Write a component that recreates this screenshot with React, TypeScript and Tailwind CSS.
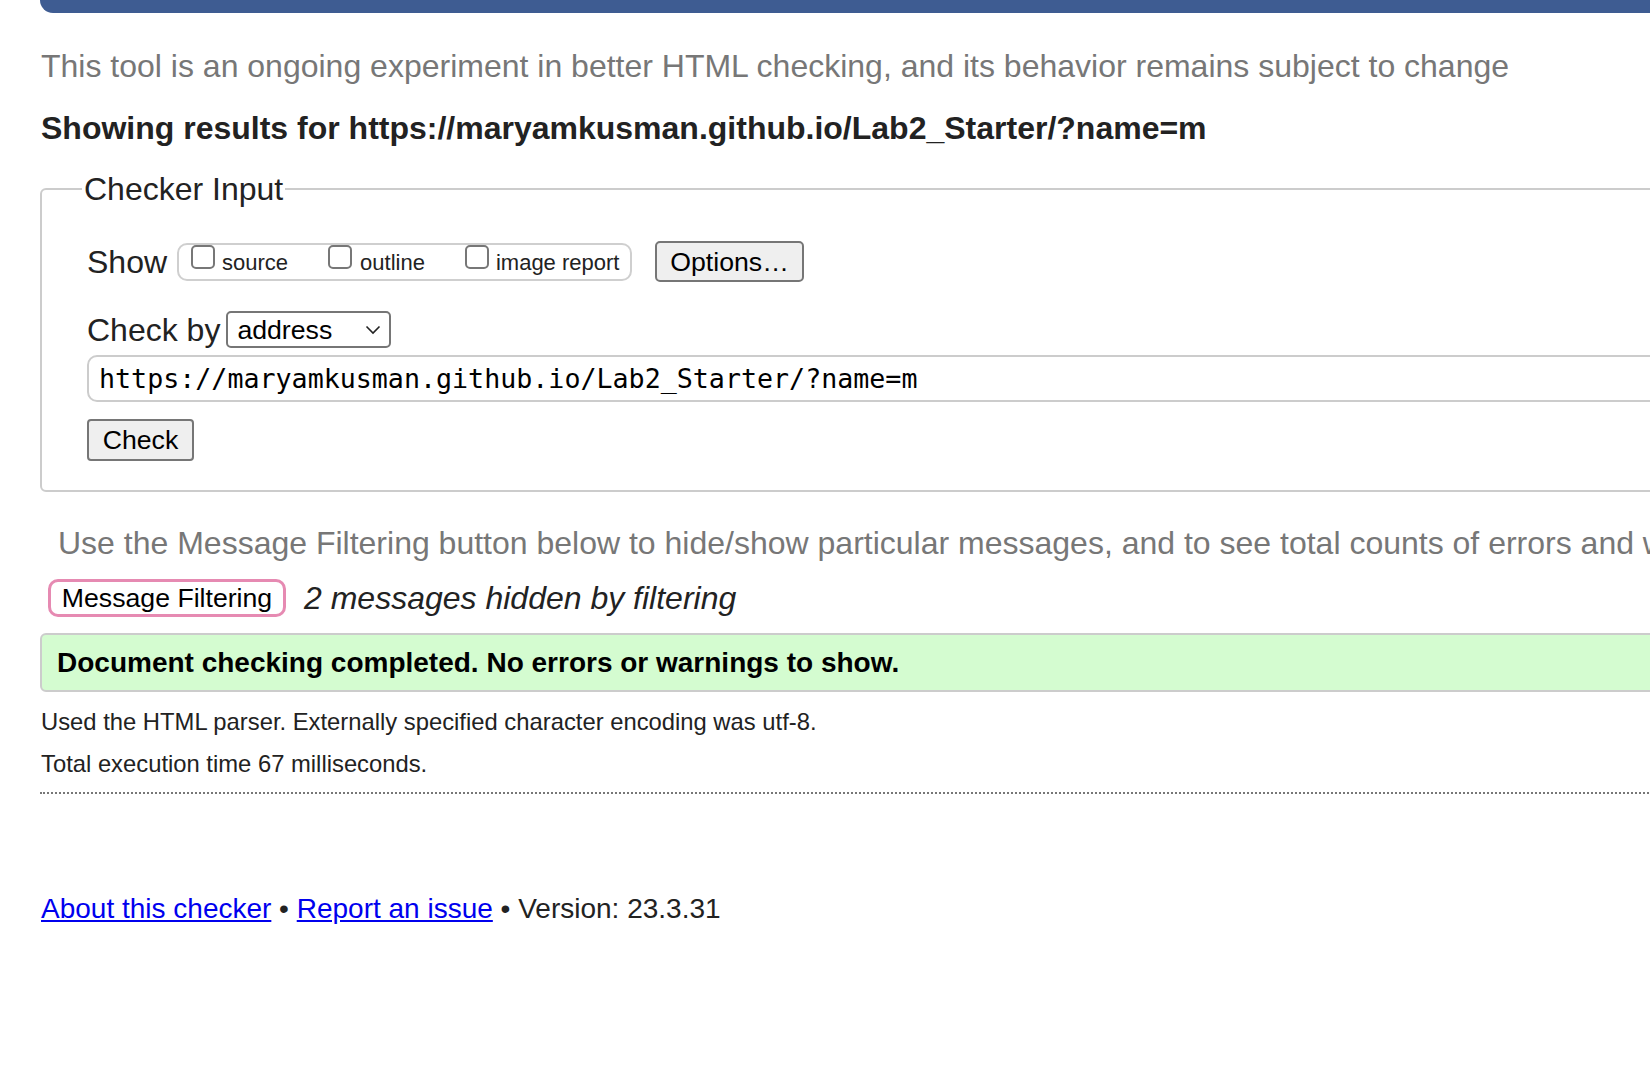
import React from "react";

function Box() {
  return <span className="inline-block w-[24px] h-[24px] mb-[10px] shrink-0 rounded-[5px] border-2 border-[#777777] bg-white" />;
}

export default function App() {
  return (
    <div className="w-[1650px] h-[1066px] overflow-hidden bg-white font-['Liberation_Sans',Arial,sans-serif] text-[#222222]">
      <div className="w-[2200px]">
        <div className="ml-[40px] h-[13px] rounded-bl-[13px] bg-[#3e5c92]" />
        <div className="pl-[41px]">
          <p className="mt-[35px] text-[32px] leading-[36px] text-[#777777] whitespace-nowrap">
            This tool is an ongoing experiment in better HTML checking, and its behavior remains subject to change
          </p>
          <p className="mt-[26px] text-[32px] leading-[36px] font-bold text-[#222222] whitespace-nowrap">
            Showing results for https://maryamkusman.github.io/Lab2_Starter/?name=m
          </p>
        </div>
        <fieldset className="mt-[25px] ml-[40px] border-2 border-[#cccccc] rounded-[6px] pl-[45px] pb-[29px]">
          <legend className="ml-[-5px] px-[2px] text-[32px] leading-[36px] text-[#222222]">Checker Input</legend>
          <div className="pt-[34px] flex items-center h-[75px]">
            <span className="text-[32px] leading-[36px]">Show</span>
            <div className="ml-[10px] h-[38px] w-[455px] flex items-center rounded-[10px] border-2 border-[#cfcfcf] pl-[12px]">
              <span className="flex items-center">
                <Box />
                <span className="ml-[7px] text-[22px] leading-[24px] mt-[2px]">source</span>
              </span>
              <span className="flex items-center ml-[40px]">
                <Box />
                <span className="ml-[8px] text-[22px] leading-[24px] mt-[2px]">outline</span>
              </span>
              <span className="flex items-center ml-[40px]">
                <Box />
                <span className="ml-[7px] text-[22px] leading-[24px] mt-[2px]">image report</span>
              </span>
            </div>
            <div className="ml-[23px] w-[149px] h-[41px] flex items-center justify-center rounded-[5px] border-2 border-[#767676] bg-[#efefef] text-[26.67px] leading-[30px] text-black">
              Options…
            </div>
          </div>
          <div className="mt-[29px] flex items-center h-[37px]">
            <span className="text-[32px] leading-[36px]">Check by</span>
            <div className="ml-[6px] w-[165px] h-[37px] flex items-center justify-between rounded-[5px] border-2 border-[#767676] bg-white pl-[9px] pr-[8px] text-[26.67px] leading-[30px] text-black">
              <span>address</span>
              <svg width="16" height="10" viewBox="0 0 16 10" fill="none">
                <polyline points="1.5,1.5 8,8 14.5,1.5" stroke="#222" strokeWidth="1.6" fill="none" />
              </svg>
            </div>
          </div>
          <div className="mt-[7px] h-[47px] flex items-center rounded-[10px] border-2 border-[#cccccc] pl-[10px] font-['DejaVu_Sans_Mono',monospace] text-[26.67px] leading-[30px] text-black whitespace-nowrap">
            https://maryamkusman.github.io/Lab2_Starter/?name=m
          </div>
          <div className="mt-[17px] w-[107px] h-[42px] flex items-center justify-center rounded-[4px] border-2 border-[#767676] bg-[#efefef] text-[26.67px] leading-[30px] text-black">
            Check
          </div>
        </fieldset>
        <p className="mt-[33px] ml-[58px] text-[32px] leading-[36px] text-[#777777] whitespace-nowrap">
          Use the Message Filtering button below to hide/show particular messages, and to see total counts of errors and warnings.
        </p>
        <div className="mt-[18px] ml-[48px] flex items-center">
          <div className="w-[238px] h-[38px] flex items-center justify-center rounded-[10px] border-[3px] border-[#e68ab2] bg-white text-[26.67px] leading-[30px] text-black">
            Message Filtering
          </div>
          <span className="ml-[18px] text-[32px] leading-[36px] italic text-[#222222]">2 messages hidden by filtering</span>
        </div>
        <div className="mt-[16px] ml-[40px] h-[59px] flex items-center rounded-[6px] border-2 border-[#cccccc] bg-[#d4fcd0] pl-[15px]">
          <span className="text-[28px] leading-[32px] font-bold text-black whitespace-nowrap">
            Document checking completed. No errors or warnings to show.
          </span>
        </div>
        <div className="pl-[41px]">
          <p className="mt-[15px] text-[23.8px] leading-[30px] text-[#222222]">
            Used the HTML parser. Externally specified character encoding was utf-8.
          </p>
          <p className="mt-[12px] text-[23.8px] leading-[30px] text-[#222222]">Total execution time 67 milliseconds.</p>
        </div>
        <div className="mt-[13px] ml-[40px] border-t-2 border-dotted border-[#777777]" />
        <p className="mt-[100px] ml-[41px] text-[28px] leading-[30px] text-[#222222] whitespace-nowrap">
          <a className="text-[#0000ee] underline">About this checker</a> • <a className="text-[#0000ee] underline">Report an issue</a> • Version: 23.3.31
        </p>
      </div>
    </div>
  );
}
